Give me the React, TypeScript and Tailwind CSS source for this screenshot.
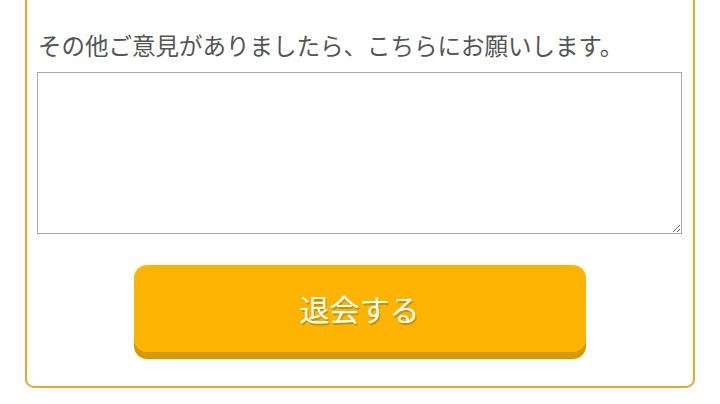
export default function App() {
  return (
    <div
      className="min-h-[404px] bg-white overflow-hidden"
      style={{ fontFamily: '"Noto Sans CJK JP", "Noto Sans", sans-serif' }}
    >
      <div className="mx-[25px] -mt-[10px] border-2 border-[#e9a52c] rounded-b-[9px] pt-[37px] pl-[10px] pr-[11px] pb-[34px]">
        <p className="text-[23.5px] leading-[32px] text-[#555555] pl-[1px] whitespace-nowrap">
          その他ご意見がありましたら、こちらにお願いします。
        </p>
        <textarea className="block w-full h-[162px] mt-[11px] border border-[#aaaaaa] outline-none resize-y" />
        <div className="flex justify-center mt-[31px]">
          <button
            className="w-[452px] h-[87px] rounded-[13px] bg-[#fdb400] shadow-[0_7px_0_#d89900] text-white text-[30px] flex items-center justify-center"
            style={{ textShadow: '1px 2px 0 #c99300' }}
          >
            退会する
          </button>
        </div>
      </div>
    </div>
  );
}
